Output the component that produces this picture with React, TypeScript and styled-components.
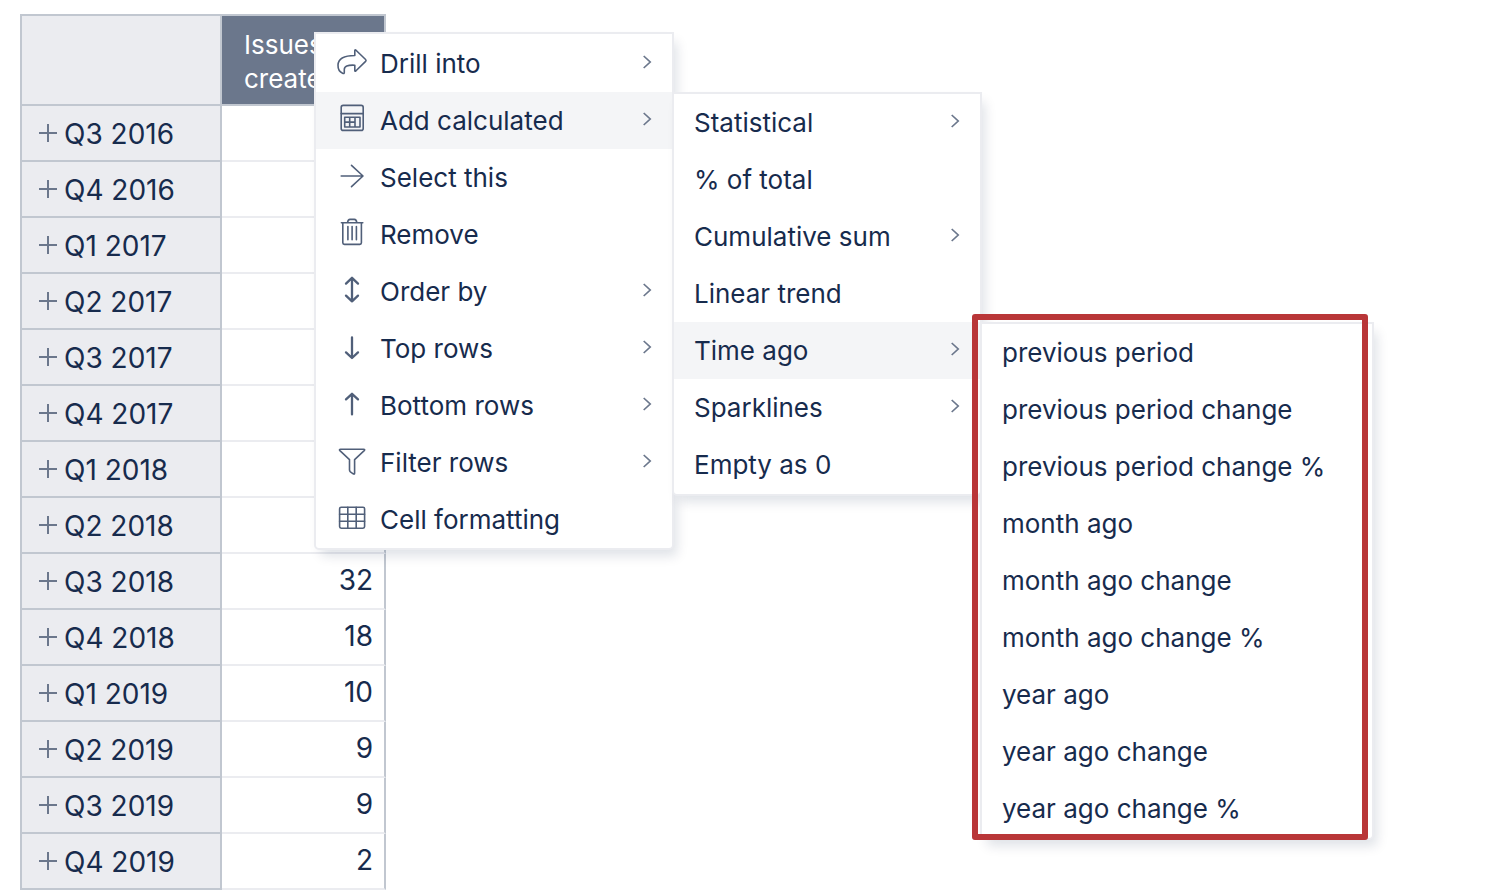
import React from 'react';
import styled, { createGlobalStyle, css } from 'styled-components';

const color = {
  text: '#172b4d',
  icon: '#505f79',
  muted: '#6b778c',
  line: '#c1c7d0',
  lineLight: '#ebecf0',
  hover: '#f4f5f7',
  marker: '#b93638',
};

const GlobalStyle = createGlobalStyle`
  *, *::before, *::after { box-sizing: border-box; }
  body {
    margin: 0;
    background: #fff;
    color: ${color.text};
    font-family: Inter, "Liberation Sans", sans-serif;
  }
  button { font: inherit; color: inherit; background: none; border: 0; padding: 0; cursor: pointer; }
`;

const Page = styled.main`
  position: relative;
  padding: 14px 20px 0;
`;

const Table = styled.table`
  border-collapse: separate;
  border-spacing: 0;
  border-top: 2px solid ${color.line};
  border-left: 2px solid ${color.line};
  font-size: 28px;
  line-height: 34px;
`;

const CornerCell = styled.td`
  width: 200px;
  height: 90px;
  padding: 0;
  background: ${color.lineLight};
  border-right: 2px solid ${color.line};
  border-bottom: 2px solid ${color.line};
`;

const MeasureHeader = styled.th`
  width: 164px;
  padding: 4px 18px 0 22px;
  background: ${color.muted};
  border-right: 2px solid ${color.line};
  border-bottom: 2px solid ${color.line};
  color: #fff;
  font-size: 26px;
  font-weight: 400;
  text-align: left;
`;

const PeriodHeader = styled.th`
  height: 56px;
  padding: 2px 0 0 17px;
  background: ${color.lineLight};
  border-right: 2px solid ${color.line};
  border-bottom: 2px solid ${color.line};
  font-weight: 400;
  text-align: left;
`;

const PeriodLabel = styled.div`
  display: flex;
  align-items: center;
  gap: 7px;
`;

const ExpandButton = styled.button`
  display: flex;
  padding-bottom: 2px;
  color: ${color.muted};
`;

const ValueCell = styled.td`
  height: 56px;
  padding: 0 11px 2px;
  border-right: 2px solid ${color.line};
  border-bottom: 2px solid ${color.lineLight};
  text-align: right;
`;

const panel = css`
  position: absolute;
  margin: 0;
  list-style: none;
  background: #fff;
  border: 2px solid ${color.lineLight};
  border-radius: 0 0 5px 5px;
  box-shadow: 5px 8px 12px -2px rgba(9, 30, 66, 0.13);
`;

const RootMenu = styled.ul`
  ${panel}
  top: 32px;
  left: 314px;
  width: 360px;
  padding: 1px 0 0;
`;

const SubMenu = styled.ul<{ $width: number; $marked?: boolean }>`
  ${panel}
  top: 0;
  left: 100%;
  width: ${(p) => p.$width}px;
  padding: 0 0 1px;
  ${(p) =>
    p.$marked &&
    css`
      &::after {
        content: '';
        position: absolute;
        inset: -10px 4px -2px -10px;
        border: 6px solid ${color.marker};
        border-radius: 3px;
        pointer-events: none;
      }
    `}
`;

const MenuEntry = styled.li`
  position: relative;
`;

const MenuButton = styled.button<{ $active?: boolean }>`
  display: flex;
  align-items: center;
  gap: 12px;
  width: 100%;
  height: 57px;
  padding: 0 20px;
  background: ${(p) => (p.$active ? color.hover : 'transparent')};
  font-size: 26px;
  line-height: 32px;
  text-align: left;
  white-space: nowrap;
`;

const MenuLabel = styled.span`
  flex: 1;
`;

const MenuIcon = styled.svg`
  flex: none;
  width: 32px;
  height: 32px;
  margin-bottom: 2px;
  fill: none;
  stroke: ${color.icon};
  stroke-width: 1.6;
  stroke-linejoin: round;
  stroke-linecap: round;
`;

const ChevronIcon = styled.svg`
  flex: none;
  width: 10px;
  height: 16px;
  margin-bottom: 4px;
  fill: none;
  stroke: ${color.muted};
  stroke-width: 1.7;
`;

const Chevron = () => (
  <ChevronIcon viewBox="0 0 10 16" aria-hidden="true">
    <path d="M1.7 2 L8.2 8 L1.7 14" />
  </ChevronIcon>
);

const Plus = () => (
  <svg width="18" height="18" viewBox="0 0 18 18" aria-hidden="true">
    <path d="M0 9H18M9 0V18" stroke="currentColor" strokeWidth="2" fill="none" />
  </svg>
);

const icons: Record<string, React.ReactNode> = {
  drill: (
    <path d="M18.8 8.5V3.8Q18.8 2.2 20 3.2L29.6 12.5Q30.5 13.4 29.6 14.4L20 23.8Q18.8 24.8 18.8 23.4V18.2C11.5 17.8 8.3 19.3 8.3 22.5V25.4Q8.3 27 6.6 26.3C3.3 24.8 1.9 21.4 2 18C2.3 11.5 8 8.5 18.8 8.5Z" />
  ),
  calculator: (
    <>
      <rect x="5.2" y="1.4" width="22" height="25" rx="2" />
      <path d="M5.2 9.6H27.2M8.7 13.2H24V23H8.7ZM13.7 13.2V23M19 13.2V23M8.7 18.1H19" />
    </>
  ),
  select: <path d="M5.2 15H27M15.5 4.4L27 15L15.5 25.6" />,
  trash: (
    <path d="M5.4 4.8H26.8M11.5 4.6Q12 1.4 14 1.4H18.4Q20.4 1.4 20.8 4.6M6.8 4.8V24.8Q6.8 26.4 8.4 26.4H23.8Q25.4 26.4 25.4 24.8V4.8M11.9 8.5V21.7M16.1 8.5V21.7M20.4 8.5V21.7" />
  ),
  order: (
    <path strokeWidth="2.3" d="M16 2.8V26.4M10 8.6L16 2.8L22 8.6M10 20.6L16 26.4L22 20.6" />
  ),
  down: <path strokeWidth="2.3" d="M16 5.4V26M10 20.4L16 26L22 20.4" />,
  up: <path strokeWidth="2.3" d="M16 25.4V4.8M10 10.4L16 4.8L22 10.4" />,
  filter: (
    <path d="M4.6 3.3H27.6Q29.4 3.3 28.2 4.7L18.6 13.6V27.2Q18.6 28.6 17.2 27.8L14.4 25.8Q13.5 25 13.5 24V13.6L3.9 4.7Q2.8 3.3 4.6 3.3Z" />
  ),
  grid: (
    <>
      <rect x="3.6" y="4.2" width="25" height="21" rx="1.6" />
      <path d="M11.8 4.2V25.2M20.2 4.2V25.2M3.6 11.2H28.6M3.6 18.2H28.6" />
    </>
  ),
};

type Item = {
  label: string;
  icon?: string;
  expandable?: boolean;
  children?: Item[];
  childWidth?: number;
  childMarked?: boolean;
};

const timeAgo: Item[] = [
  'previous period',
  'previous period change',
  'previous period change %',
  'month ago',
  'month ago change',
  'month ago change %',
  'year ago',
  'year ago change',
  'year ago change %',
].map((label) => ({ label }));

const calculated: Item[] = [
  { label: 'Statistical', expandable: true },
  { label: '% of total' },
  { label: 'Cumulative sum', expandable: true },
  { label: 'Linear trend' },
  { label: 'Time ago', expandable: true, children: timeAgo, childWidth: 394, childMarked: true },
  { label: 'Sparklines', expandable: true },
  { label: 'Empty as 0' },
];

const actions: Item[] = [
  { label: 'Drill into', icon: 'drill', expandable: true },
  { label: 'Add calculated', icon: 'calculator', expandable: true, children: calculated, childWidth: 310 },
  { label: 'Select this', icon: 'select' },
  { label: 'Remove', icon: 'trash' },
  { label: 'Order by', icon: 'order', expandable: true },
  { label: 'Top rows', icon: 'down', expandable: true },
  { label: 'Bottom rows', icon: 'up', expandable: true },
  { label: 'Filter rows', icon: 'filter', expandable: true },
  { label: 'Cell formatting', icon: 'grid' },
];

const rows: [string, number | null][] = [
  ['Q3 2016', null],
  ['Q4 2016', null],
  ['Q1 2017', null],
  ['Q2 2017', null],
  ['Q3 2017', null],
  ['Q4 2017', null],
  ['Q1 2018', null],
  ['Q2 2018', null],
  ['Q3 2018', 32],
  ['Q4 2018', 18],
  ['Q1 2019', 10],
  ['Q2 2019', 9],
  ['Q3 2019', 9],
  ['Q4 2019', 2],
];

const MenuItems = ({ items }: { items: Item[] }) => (
  <>
    {items.map((item) => (
      <MenuEntry key={item.label} role="none">
        <MenuButton
          type="button"
          role="menuitem"
          $active={Boolean(item.children)}
          aria-haspopup={item.expandable ? 'menu' : undefined}
          aria-expanded={item.expandable ? Boolean(item.children) : undefined}
        >
          {item.icon && (
            <MenuIcon viewBox="0 0 32 32" aria-hidden="true">
              {icons[item.icon]}
            </MenuIcon>
          )}
          <MenuLabel>{item.label}</MenuLabel>
          {item.expandable && <Chevron />}
        </MenuButton>
        {item.children && (
          <SubMenu
            role="menu"
            aria-label={item.label}
            $width={item.childWidth ?? 310}
            $marked={item.childMarked}
          >
            <MenuItems items={item.children} />
          </SubMenu>
        )}
      </MenuEntry>
    ))}
  </>
);

export default function App() {
  return (
    <>
      <GlobalStyle />
      <Page>
        <Table>
          <thead>
            <tr>
              <CornerCell />
              <MeasureHeader scope="col">Issues created</MeasureHeader>
            </tr>
          </thead>
          <tbody>
            {rows.map(([period, value]) => (
              <tr key={period}>
                <PeriodHeader scope="row">
                  <PeriodLabel>
                    <ExpandButton type="button" aria-label={`Expand ${period}`}>
                      <Plus />
                    </ExpandButton>
                    {period}
                  </PeriodLabel>
                </PeriodHeader>
                <ValueCell>{value}</ValueCell>
              </tr>
            ))}
          </tbody>
        </Table>
        <RootMenu role="menu" aria-label="Issues created actions">
          <MenuItems items={actions} />
        </RootMenu>
      </Page>
    </>
  );
}
